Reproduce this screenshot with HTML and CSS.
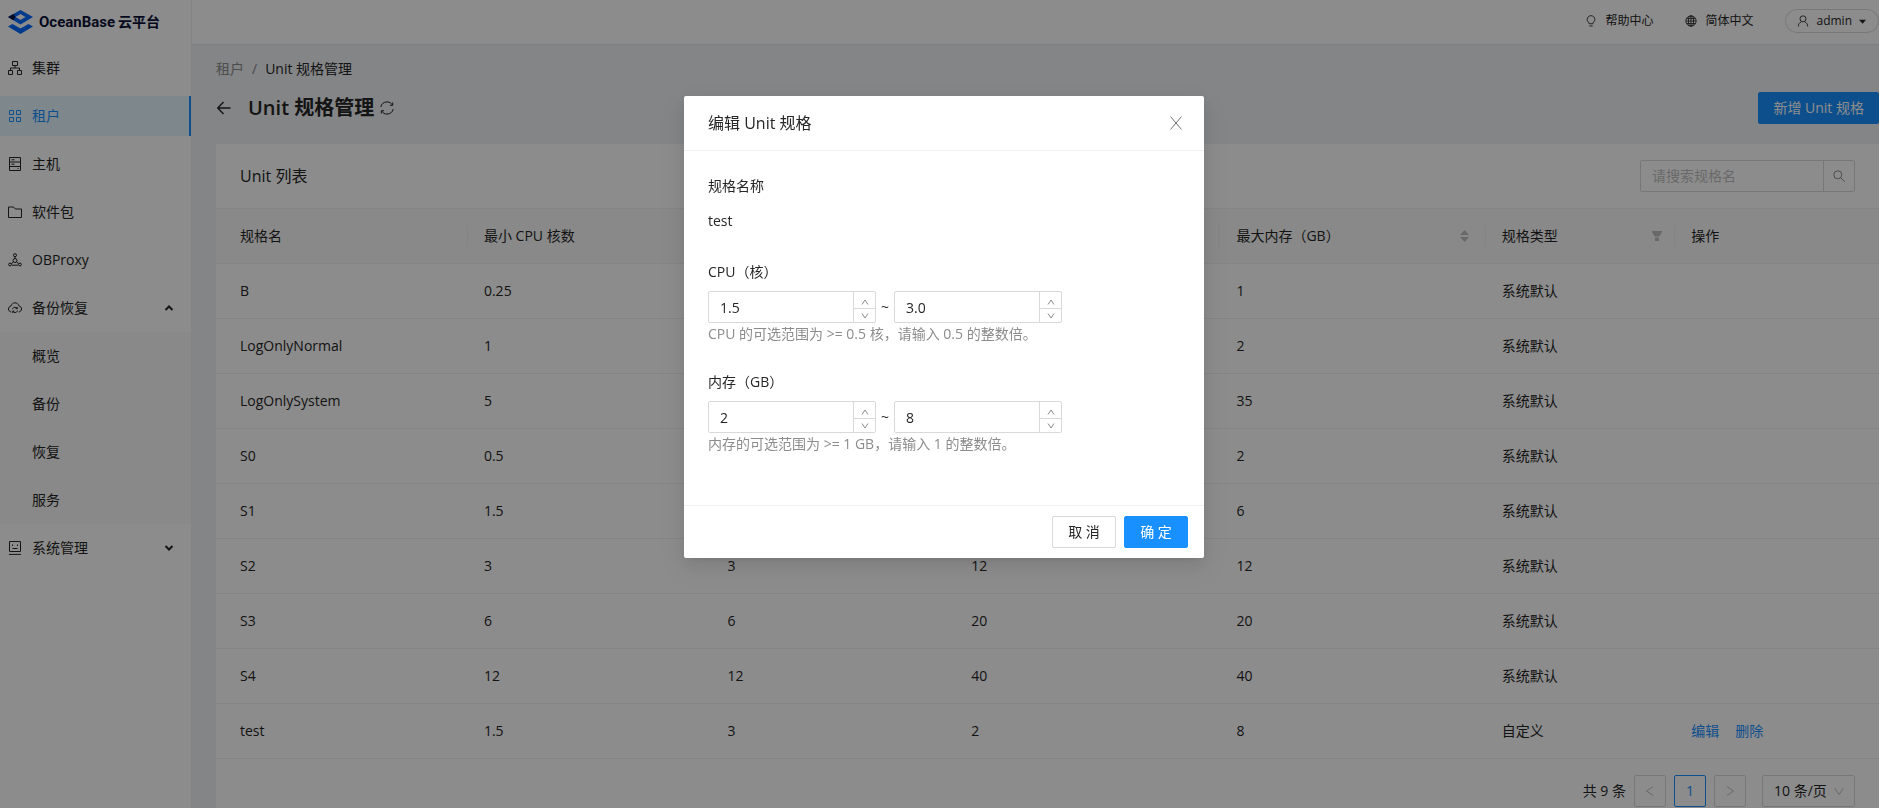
FILE: index.html
```html
<!DOCTYPE html>
<html lang="zh-CN">
<head>
<meta charset="utf-8">
<title>Unit 规格管理 - OceanBase 云平台</title>
<link rel="stylesheet" href="styles.css">
</head>
<body>
<div class="app">
  <aside class="sidebar">
    <a class="brand" href="#">
      <svg class="brand-mark" viewBox="0 0 25 24" aria-hidden="true">
        <path fill="#006aff" fill-rule="evenodd" d="M12.500 0 25 7 12.500 14.500 0 7ZM12.500 4 7.500 7 12.500 10 17.500 7Z"/>
        <path fill="#07133f" d="M0 7 5.500 4 7.500 7 5.500 10.200Z"/>
        <path fill="#006aff" d="M0 16.500 4.500 14 12.500 18.500 20.500 14 25 16.500 12.500 24Z"/>
      </svg>
      <span class="brand-name">OceanBase</span><span class="brand-cn">云平台</span>
    </a>
    <nav class="menu">
      <a class="menu-item" href="#"><svg class="icon" viewBox="0 0 14 14"><path d="M4.500 .5h5v4h-5zM.5 9.500h4v4h-4zM9.500 9.500h4v4h-4zM7 4.500V7M2.500 9.500V7h9v2.500"/></svg>集群</a>
      <a class="menu-item active" href="#"><svg class="icon" viewBox="0 0 14 14"><path d="M1.500 1.500h4v4h-4zM8.500 1.500h4v4h-4zM1.500 8.500h4v4h-4zM8.500 8.500h4v4h-4z"/></svg>租户</a>
      <a class="menu-item" href="#"><svg class="icon" viewBox="0 0 14 14"><path d="M1.500 .5h11v13h-11zM1.500 5h11M1.500 9.500h11M3.500 2.800h3M3.500 7.200h3M9.500 11.500h1"/></svg>主机</a>
      <a class="menu-item" href="#"><svg class="icon" viewBox="0 0 14 14"><path d="M.5 2h5l1.800 2h6.200v8.500H.5z"/></svg>软件包</a>
      <a class="menu-item" href="#"><svg class="icon" viewBox="0 0 14 14"><circle cx="7" cy="2.200" r="1.500"/><circle cx="7" cy="7.500" r="2"/><circle cx="2" cy="11.500" r="1.400"/><circle cx="12" cy="11.500" r="1.400"/><path d="M7 3.700v1.800M5.500 9 3.200 10.700M8.500 9l2.300 1.700M4 12.200h6"/></svg>OBProxy</a>
      <button class="menu-item" type="button" aria-expanded="true"><svg class="icon" viewBox="0 0 14 14"><path d="M3.300 11C1.500 10.700.5 9.500.5 8c0-1.600 1-2.700 2.500-3C3.600 3 5.100 1.800 7 1.800S10.400 3 11 5c1.500.3 2.500 1.400 2.500 3 0 1.500-1 2.700-2.800 3M4.500 8.200C4.800 7 5.800 6.300 7 6.300c1 0 1.700.4 2.200 1.100M9.500 9.600C9.200 10.900 8.200 11.500 7 11.500c-1 0-1.700-.4-2.200-1.100M9.300 5.900v1.800H7.700M4.700 11.900v-1.800h1.600"/></svg>备份恢复<svg class="fold" viewBox="0 0 10 10"><path d="M1.500 7 5 3.500 8.500 7"/></svg></button>
      <div class="submenu">
        <a class="menu-item" href="#">概览</a>
        <a class="menu-item" href="#">备份</a>
        <a class="menu-item" href="#">恢复</a>
        <a class="menu-item" href="#">服务</a>
      </div>
      <button class="menu-item" type="button" aria-expanded="false"><svg class="icon" viewBox="0 0 14 14"><path d="M1.500 .5h11v10h-11zM1 13.400h12M4.500 3.500v1.500M9.500 3.500v1.500M4.500 7.500h5"/></svg>系统管理<svg class="fold" viewBox="0 0 10 10"><path d="M1.500 3 5 6.500 8.500 3"/></svg></button>
    </nav>
  </aside>
  <div class="page">
    <header class="topbar">
      <a class="top-link" href="#"><svg class="icon icon-sm" viewBox="0 0 14 14"><path d="M4.700 10.200V8.900C3.300 8.100 2.500 6.900 2.500 5.300 2.500 2.800 4.500.8 7 .8s4.500 2 4.500 4.500c0 1.600-.8 2.800-2.200 3.600v1.300zM5 12.800h4"/></svg>帮助中心</a>
      <a class="top-link" href="#"><svg class="icon icon-sm" viewBox="0 0 14 14"><circle cx="7" cy="7" r="6"/><ellipse cx="7" cy="7" rx="3" ry="6"/><path d="M1 7h12M7 1v12M2 4h10M2 10h10"/></svg>简体中文</a>
      <button class="user" type="button"><svg class="icon icon-sm" viewBox="0 0 14 14"><circle cx="7" cy="4.500" r="3.500"/><path d="M1.500 13.500c0-3 1.500-4.700 3.500-5.500M12.500 13.500c0-3-1.500-4.700-3.500-5.500"/></svg>admin<svg class="caret" viewBox="0 0 8 8"><path d="M0 2h8L4 6.500z"/></svg></button>
    </header>
    <main class="content">
      <nav class="crumbs"><a href="#">租户</a><span>/</span><b>Unit 规格管理</b></nav>
      <div class="title-row">
        <button class="plain" type="button" aria-label="返回"><svg class="icon back" viewBox="0 0 14 14"><path d="M13.500 7H1M6.500 1 .8 7l5.700 6"/></svg></button>
        <h1>Unit 规格管理</h1>
        <button class="plain" type="button" aria-label="刷新"><svg class="icon" viewBox="0 0 14 14"><path d="M.8 6C1.300 3 3.800.9 7 .9c2.300 0 4.200 1.100 5.300 3M13.200 8c-.5 3-3 5.100-6.200 5.100-2.300 0-4.200-1.100-5.300-3M12.700 1.500v2.800H10M1.300 12.500V9.700H4"/></svg></button>
        <button class="btn primary add" type="button">新增 Unit 规格</button>
      </div>
      <section class="card">
        <div class="card-head">
          <h2><b>Unit</b> 列表</h2>
          <form class="search"><input type="text" placeholder="请搜索规格名" aria-label="请搜索规格名"><button type="button" aria-label="搜索"><svg class="icon" viewBox="0 0 14 14"><circle cx="5.800" cy="5.800" r="4"/><path d="m8.800 8.800 4 4"/></svg></button></form>
        </div>
        <table class="units">
          <colgroup><col class="c-name"><col class="c-cpu"><col class="c-cpu"><col class="c-mem"><col class="c-mem"><col class="c-type"><col></colgroup>
          <thead><tr>
            <th><div>规格名</div></th>
            <th><div><span>最小 <b>CPU</b> 核数</span><svg class="sort" viewBox="0 0 9 12"><path d="M4.500 0 9 5H0zM4.500 12 0 7h9z"/></svg></div></th>
            <th><div><span>最大 <b>CPU</b> 核数</span><svg class="sort" viewBox="0 0 9 12"><path d="M4.500 0 9 5H0zM4.500 12 0 7h9z"/></svg></div></th>
            <th><div><span>最小内存（<b>GB</b>）</span><svg class="sort" viewBox="0 0 9 12"><path d="M4.500 0 9 5H0zM4.500 12 0 7h9z"/></svg></div></th>
            <th><div><span>最大内存（<b>GB</b>）</span><svg class="sort" viewBox="0 0 9 12"><path d="M4.500 0 9 5H0zM4.500 12 0 7h9z"/></svg></div></th>
            <th><div class="filterable">规格类型<svg class="filter" viewBox="0 0 12 12"><path d="M.5 1h11L8.300 6.500H3.700zM4 7.500h4V11H4z"/></svg></div></th>
            <th><div>操作</div></th>
          </tr></thead>
          <tbody>
            <tr><td>B</td><td>0.25</td><td></td><td></td><td>1</td><td>系统默认</td><td></td></tr>
            <tr><td>LogOnlyNormal</td><td>1</td><td></td><td></td><td>2</td><td>系统默认</td><td></td></tr>
            <tr><td>LogOnlySystem</td><td>5</td><td></td><td></td><td>35</td><td>系统默认</td><td></td></tr>
            <tr><td>S0</td><td>0.5</td><td></td><td></td><td>2</td><td>系统默认</td><td></td></tr>
            <tr><td>S1</td><td>1.5</td><td></td><td></td><td>6</td><td>系统默认</td><td></td></tr>
            <tr><td>S2</td><td>3</td><td>3</td><td>12</td><td>12</td><td>系统默认</td><td></td></tr>
            <tr><td>S3</td><td>6</td><td>6</td><td>20</td><td>20</td><td>系统默认</td><td></td></tr>
            <tr><td>S4</td><td>12</td><td>12</td><td>40</td><td>40</td><td>系统默认</td><td></td></tr>
            <tr><td>test</td><td>1.5</td><td>3</td><td>2</td><td>8</td><td>自定义</td><td><a href="#">编辑</a><a href="#">删除</a></td></tr>
          </tbody>
        </table>
        <div class="pager">
          <span>共 9 条</span>
          <button type="button" aria-label="上一页" disabled><svg class="arrow" viewBox="0 0 12 12"><path d="M9 1.500 2.500 6 9 10.500"/></svg></button>
          <button type="button" class="current">1</button>
          <button type="button" aria-label="下一页" disabled><svg class="arrow" viewBox="0 0 12 12"><path d="M3 1.500 9.500 6 3 10.500"/></svg></button>
          <div class="size"><select aria-label="每页条数"><option>10 条/页</option></select><svg class="arrow" viewBox="0 0 12 12"><path d="M1.500 3 6 9.500 10.500 3"/></svg></div>
        </div>
      </section>
    </main>
  </div>
</div>
<div class="mask">
  <form class="modal" role="dialog" aria-labelledby="dialog-title">
    <header class="modal-head">
      <h2 id="dialog-title">编辑 <b>Unit</b> 规格</h2>
      <button class="plain close" type="button" aria-label="关闭"><svg class="icon" viewBox="0 0 14 14"><path d="m1.500 .5 11 13M12.500 .5l-11 13"/></svg></button>
    </header>
    <div class="modal-body">
      <div class="field"><span class="label">规格名称</span><div class="value">test</div></div>
      <div class="field">
        <label class="label" for="cpu-min">CPU（核）</label>
        <div class="range">
          <div class="number"><input id="cpu-min" type="number" step="0.5" value="1.5"><div class="steps"><button type="button" aria-label="增加"><svg viewBox="0 0 8 8"><path d="M1 6.500 4 2l3 4.500"/></svg></button><button type="button" aria-label="减少"><svg viewBox="0 0 8 8"><path d="M1 1.500 4 6l3-4.500"/></svg></button></div></div>
          <span class="tilde">~</span>
          <div class="number"><input aria-label="CPU 最大值" type="number" step="0.5" value="3.0"><div class="steps"><button type="button" aria-label="增加"><svg viewBox="0 0 8 8"><path d="M1 6.500 4 2l3 4.500"/></svg></button><button type="button" aria-label="减少"><svg viewBox="0 0 8 8"><path d="M1 1.500 4 6l3-4.500"/></svg></button></div></div>
        </div>
        <p class="hint">CPU 的可选范围为 &gt;= 0.5 核，请输入 0.5 的整数倍。</p>
      </div>
      <div class="field">
        <label class="label" for="mem-min">内存（GB）</label>
        <div class="range">
          <div class="number"><input id="mem-min" type="number" value="2"><div class="steps"><button type="button" aria-label="增加"><svg viewBox="0 0 8 8"><path d="M1 6.500 4 2l3 4.500"/></svg></button><button type="button" aria-label="减少"><svg viewBox="0 0 8 8"><path d="M1 1.500 4 6l3-4.500"/></svg></button></div></div>
          <span class="tilde">~</span>
          <div class="number"><input aria-label="内存最大值" type="number" value="8"><div class="steps"><button type="button" aria-label="增加"><svg viewBox="0 0 8 8"><path d="M1 6.500 4 2l3 4.500"/></svg></button><button type="button" aria-label="减少"><svg viewBox="0 0 8 8"><path d="M1 1.500 4 6l3-4.500"/></svg></button></div></div>
        </div>
        <p class="hint">内存的可选范围为 &gt;= 1 GB，请输入 1 的整数倍。</p>
      </div>
    </div>
    <footer class="modal-foot">
      <button class="btn" type="button">取 消</button>
      <button class="btn primary" type="button">确 定</button>
    </footer>
  </form>
</div>
</body>
</html>
```
FILE: styles.css
```css
* { box-sizing: border-box; }

body {
  margin: 0;
  overflow: hidden;
  color: #262626;
  font: 14px/22px "Open Sans", "Noto Sans CJK SC", sans-serif;
}

a { color: inherit; text-decoration: none; }
button, input, select { font: inherit; color: inherit; }
button { cursor: pointer; }
h1, h2, p { margin: 0; }
h2 { font-size: 16px; line-height: 24px; font-weight: 400; }
h2 b, th b { font-weight: 500; }

.icon {
  width: 14px;
  height: 14px;
  flex: none;
  fill: none;
  stroke: currentColor;
  stroke-width: 1;
}
.icon-sm { width: 12px; height: 12px; }
.plain { display: flex; padding: 0; border: 0; background: none; }

.app { display: flex; height: 100vh; background: #f0f2f5; }

/* Sidebar */
.sidebar {
  flex: none;
  width: 192px;
  background: #fff;
  border-right: 1px solid #f0f0f0;
}
.brand { display: flex; align-items: center; height: 44px; padding-left: 8px; color: #0b1138; }
.brand-mark { width: 25px; height: 24px; margin-right: 6px; }
.brand-name { font: 700 15px/24px Roboto, sans-serif; }
.brand-cn { margin-left: 3px; font-weight: 700; }
.menu { display: flex; flex-direction: column; gap: 8px; padding-top: 4px; }
.menu-item {
  display: flex;
  align-items: center;
  gap: 10px;
  width: 100%;
  height: 40px;
  padding: 0 17px 0 8px;
  border: 0;
  background: none;
  text-align: left;
}
.menu-item.active { color: #1890ff; background: #e6f7ff; border-right: 2px solid #1890ff; }
.submenu {
  display: flex;
  flex-direction: column;
  gap: 8px;
  margin: -4px 0;
  padding: 4px 0;
  background: #fafafa;
}
.submenu .menu-item { padding-left: 32px; }
.fold { width: 10px; height: 10px; margin-left: auto; fill: none; stroke: currentColor; stroke-width: 2; }

/* Top bar */
.page { flex: 1; min-width: 0; }
.topbar {
  display: flex;
  align-items: center;
  justify-content: flex-end;
  gap: 32px;
  height: 45px;
  padding-bottom: 2px;
  background: #fff;
  border-bottom: 1px solid #e8e8e8;
  font-size: 12px;
}
.top-link, .user { display: flex; align-items: center; gap: 8px; }
.user {
  gap: 7px;
  height: 24px;
  padding: 0 12px 0 11px;
  border: 1px solid #d9d9d9;
  border-radius: 12px;
  background: #fff;
}
.caret { width: 7px; height: 7px; fill: currentColor; }

/* Page heading */
.content { padding: 13px 0 0 24px; }
.crumbs { display: flex; gap: 8px; color: #8c8c8c; }
.crumbs b { color: #262626; font-weight: 400; }
.title-row { display: flex; align-items: center; height: 32px; margin: 12px 0 20px; }
.title-row .back { margin: 0 17px 0 1px; stroke-width: 1.4; }
h1 { margin-right: 6px; font-size: 20px; line-height: 28px; font-weight: 600; }
.btn {
  height: 32px;
  padding: 0 14px;
  border: 1px solid #d9d9d9;
  border-radius: 2px;
  background: #fff;
}
.btn.primary { color: #fff; background: #1890ff; border-color: #1890ff; }
.add { margin-left: auto; }

/* Unit list */
.card { background: #fff; border-radius: 2px 0 0 0; }
.card-head { display: flex; align-items: center; justify-content: space-between; height: 64px; padding: 0 24px; }
.search { display: flex; width: 215px; height: 32px; border: 1px solid #d9d9d9; border-radius: 2px; }
.search input { flex: 1; min-width: 0; padding: 0 11px; border: 0; background: none; outline: 0; }
.search input::placeholder { color: #bfbfbf; }
.search button {
  display: grid;
  place-items: center;
  width: 31px;
  padding: 0;
  border: 0;
  border-left: 1px solid #d9d9d9;
  background: none;
  color: #8c8c8c;
}
.units { width: 100%; table-layout: fixed; border-collapse: separate; border-spacing: 0; text-align: left; }
.c-name { width: 15.15%; }
.c-cpu { width: 14.65%; }
.c-mem { width: 15.95%; }
.c-type { width: 11.4%; }
.units th, .units td { height: 55px; padding: 0 16px; border-bottom: 1px solid #f0f0f0; }
.units th { height: 56px; padding: 0; background: #fafafa; border-top: 1px solid #f0f0f0; font-weight: 400; }
.units th div { display: flex; align-items: center; justify-content: space-between; padding: 0 16px; border-right: 1px solid #f0f0f0; }
.units th .filterable { padding-right: 11px; }
.units th:last-child div { border-right: 0; }
.units td:first-child, .units th:first-child div { padding-left: 24px; }
.units td a { margin-right: 16px; color: #1890ff; }
.sort { width: 9px; height: 12px; fill: #bfbfbf; }
.filter { width: 12px; height: 12px; fill: #bfbfbf; }

.pager { display: flex; align-items: center; justify-content: flex-end; gap: 8px; padding: 16px 24px; }
.pager button {
  display: grid;
  place-items: center;
  width: 32px;
  height: 32px;
  padding: 0;
  border: 1px solid #d9d9d9;
  border-radius: 2px;
  background: #fff;
}
.pager .current { color: #1890ff; border-color: #1890ff; }
.arrow { width: 12px; height: 12px; fill: none; stroke: #bfbfbf; }
.size { position: relative; margin-left: 8px; }
.size select {
  appearance: none;
  width: 93px;
  height: 32px;
  padding: 0 11px;
  border: 1px solid #d9d9d9;
  border-radius: 2px;
  background: #fff;
}
.size .arrow { position: absolute; right: 10px; top: 10px; pointer-events: none; }

/* Dialog */
.mask {
  position: fixed;
  inset: 0;
  display: flex;
  align-items: flex-start;
  justify-content: center;
  padding: 96px 0 0 9px;
  background: rgba(0, 0, 0, 0.45);
}
.modal {
  width: 520px;
  background: #fff;
  border-radius: 2px;
  box-shadow: 0 3px 6px -4px rgba(0, 0, 0, 0.12), 0 6px 16px rgba(0, 0, 0, 0.08), 0 9px 28px 8px rgba(0, 0, 0, 0.05);
}
.modal-head {
  display: flex;
  align-items: center;
  justify-content: space-between;
  height: 55px;
  padding: 0 21px 0 24px;
  border-bottom: 1px solid #f0f0f0;
}
.close { color: #737373; }
.modal-body { display: flex; flex-direction: column; gap: 24px; padding: 24px 24px 48px; }
.label { display: block; margin-bottom: 8px; }
.value { height: 32px; line-height: 32px; }
.range { display: flex; align-items: center; }
.number { display: flex; width: 168px; height: 32px; border: 1px solid #d9d9d9; border-radius: 2px; }
.number input { flex: 1; min-width: 0; padding: 2px 11px 0; border: 0; outline: 0; background: none; appearance: textfield; }
.number input::-webkit-inner-spin-button { appearance: none; margin: 0; }
.steps { display: flex; flex-direction: column; width: 22px; border-left: 1px solid #d9d9d9; }
.steps button { display: grid; place-items: center; flex: 1; padding: 4px 0 0 1px; border: 0; background: none; }
.steps button + button { padding-top: 2px; border-top: 1px solid #d9d9d9; }
.steps svg { width: 8px; height: 8px; fill: none; stroke: #8c8c8c; }
.tilde { width: 18px; text-align: center; }
.hint { min-height: 24px; color: #8c8c8c; }
.modal-foot { display: flex; justify-content: flex-end; gap: 8px; padding: 10px 16px; border-top: 1px solid #f0f0f0; }
.modal-foot .btn { width: 64px; }
```
